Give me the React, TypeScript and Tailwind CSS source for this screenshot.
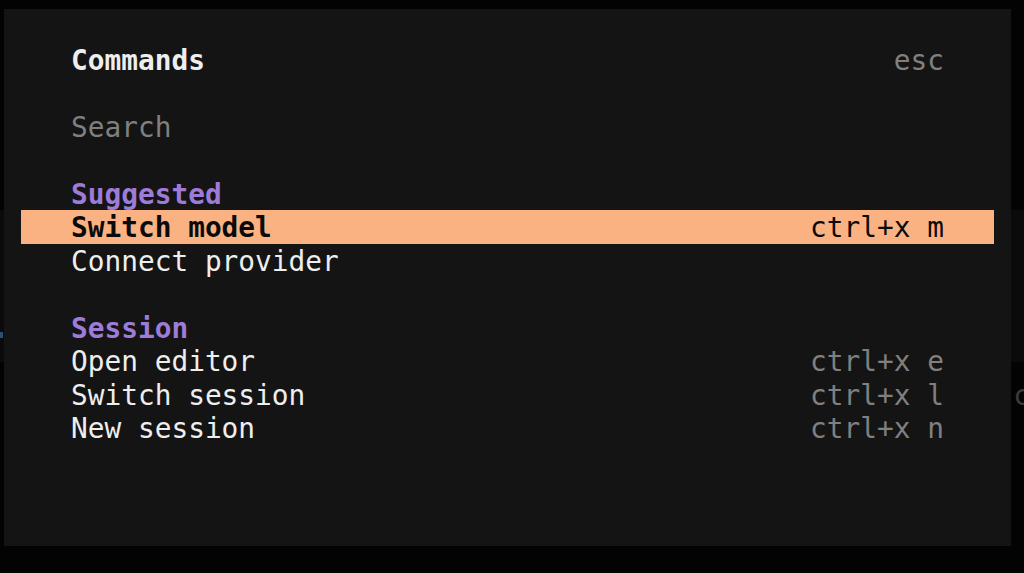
import React from "react";

const mono = { fontFamily: '"DejaVu Sans Mono", "Liberation Mono", monospace' };

type Item = { label: string; key?: string; active?: boolean };

function Row({ item }: { item: Item }) {
  return (
    <div
      className={
        "flex h-[33.5px] items-start justify-between px-[50.25px] pt-[1px] " +
        (item.active ? "bg-[#fab283] text-[#0a0a0a]" : "text-[#eeeeee]")
      }
    >
      <span className={item.active ? "font-bold" : ""}>{item.label}</span>
      {item.key && (
        <span className={item.active ? "text-[#0a0a0a]" : "text-[#808080]"}>{item.key}</span>
      )}
    </div>
  );
}

function Group({ title, items }: { title: string; items: Item[] }) {
  return (
    <div className="flex flex-col">
      <div className="flex h-[33.5px] items-start px-[50.25px] pt-[1px] font-bold text-[#9d7cd8]">{title}</div>
      {items.map((it) => (
        <Row key={it.label} item={it} />
      ))}
    </div>
  );
}

export default function App() {
  return (
    <div
      className="relative h-[573px] w-[1024px] overflow-hidden bg-[#030303] text-[27.8px] leading-[33.5px]"
      style={mono}
    >
      {/* underlying (dimmed) content */}
      <div className="flex h-full flex-col pt-[210px]">
        <div className="relative h-[152px] w-full bg-[#0b0b0b]">
          <div className="absolute left-0 top-[122px] h-[6px] w-[3px] bg-[#2c4f7a]" />
        </div>
        <div className="mt-[16px] flex h-[33.5px] items-start justify-end pt-[1px] text-[#3a3a3a]">
          <span className="mr-[-6px]">c</span>
        </div>
      </div>

      {/* modal */}
      <div className="absolute left-[4px] top-[9px] flex h-[537px] w-[1007px] flex-col bg-[#141414] px-[16.75px] pt-[33.5px]">
        <div className="flex h-[33.5px] items-start justify-between px-[50.25px] pt-[1px]">
          <span className="font-bold text-[#eeeeee]">Commands</span>
          <span className="text-[#808080]">esc</span>
        </div>
        <div className="h-[33.5px]" />
        <div className="flex h-[33.5px] items-start px-[50.25px] pt-[1px] text-[#808080]">Search</div>
        <div className="h-[33.5px]" />
        <Group
          title="Suggested"
          items={[
            { label: "Switch model", key: "ctrl+x m", active: true },
            { label: "Connect provider" },
          ]}
        />
        <div className="h-[33.5px]" />
        <Group
          title="Session"
          items={[
            { label: "Open editor", key: "ctrl+x e" },
            { label: "Switch session", key: "ctrl+x l" },
            { label: "New session", key: "ctrl+x n" },
          ]}
        />
      </div>
    </div>
  );
}
